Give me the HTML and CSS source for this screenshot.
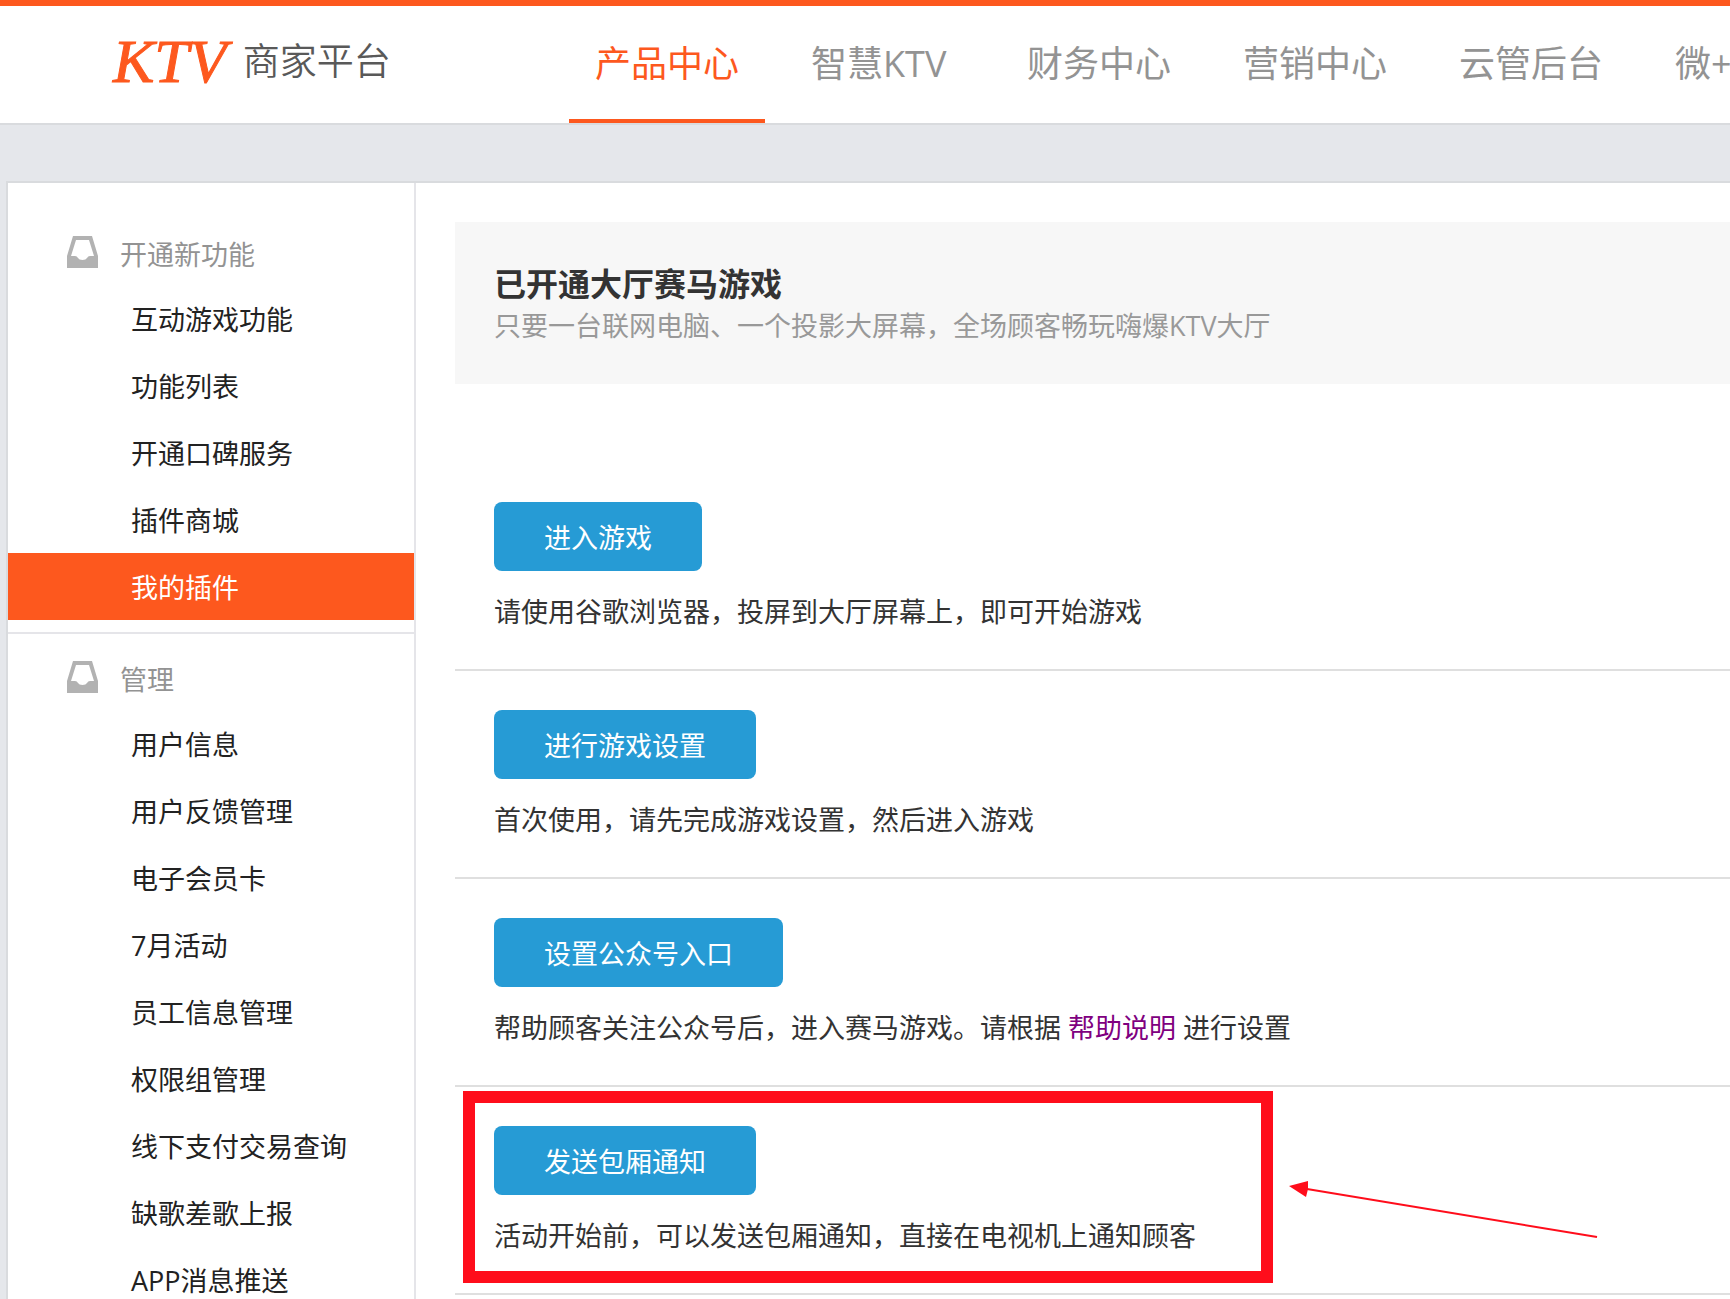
FILE: index.html
```html
<!DOCTYPE html>
<html lang="zh-CN">
<head>
<meta charset="utf-8">
<meta name="viewport" content="width=device-width, initial-scale=1">
<title>KTV 商家平台</title>
<link rel="stylesheet" href="styles.css">
</head>
<body>
<svg class="sprite" aria-hidden="true">
  <symbol id="tray" viewBox="0 0 31 32">
    <path fill-rule="evenodd" d="M6 0H25L31 20V32H0V20ZM9 4L4 20H8Q10 20 11 22Q12 24 15.500 24Q19 24 20 22Q21 20 23 20H27L22 4Z"/>
  </symbol>
</svg>
<header class="header">
  <a class="logo" href="#"><span class="logo-mark">KTV</span><span class="logo-name">商家平台</span></a>
  <nav class="nav">
    <a class="nav-link active" href="#">产品中心</a>
    <a class="nav-link" href="#">智慧KTV</a>
    <a class="nav-link" href="#">财务中心</a>
    <a class="nav-link" href="#">营销中心</a>
    <a class="nav-link" href="#">云管后台</a>
    <a class="nav-link" href="#">微+</a>
  </nav>
</header>
<div class="panel">
  <aside class="sidebar">
    <section class="group">
      <h2 class="group-title"><svg class="tray"><use href="#tray"/></svg>开通新功能</h2>
      <ul class="menu">
        <li><a class="menu-link" href="#">互动游戏功能</a></li>
        <li><a class="menu-link" href="#">功能列表</a></li>
        <li><a class="menu-link" href="#">开通口碑服务</a></li>
        <li><a class="menu-link" href="#">插件商城</a></li>
        <li><a class="menu-link active" href="#">我的插件</a></li>
      </ul>
    </section>
    <section class="group">
      <h2 class="group-title"><svg class="tray"><use href="#tray"/></svg>管理</h2>
      <ul class="menu">
        <li><a class="menu-link" href="#">用户信息</a></li>
        <li><a class="menu-link" href="#">用户反馈管理</a></li>
        <li><a class="menu-link" href="#">电子会员卡</a></li>
        <li><a class="menu-link" href="#">7月活动</a></li>
        <li><a class="menu-link" href="#">员工信息管理</a></li>
        <li><a class="menu-link" href="#">权限组管理</a></li>
        <li><a class="menu-link" href="#">线下支付交易查询</a></li>
        <li><a class="menu-link" href="#">缺歌差歌上报</a></li>
        <li><a class="menu-link" href="#">APP消息推送</a></li>
      </ul>
    </section>
  </aside>
  <main class="content">
    <div class="intro">
      <h1 class="intro-title">已开通大厅赛马游戏</h1>
      <p class="intro-text">只要一台联网电脑、一个投影大屏幕，全场顾客畅玩嗨爆KTV大厅</p>
    </div>
    <section class="row">
      <button class="button" type="button">进入游戏</button>
      <p class="note">请使用谷歌浏览器，投屏到大厅屏幕上，即可开始游戏</p>
    </section>
    <section class="row">
      <button class="button" type="button">进行游戏设置</button>
      <p class="note">首次使用，请先完成游戏设置，然后进入游戏</p>
    </section>
    <section class="row">
      <button class="button" type="button">设置公众号入口</button>
      <p class="note">帮助顾客关注公众号后，进入赛马游戏。请根据 <a class="help" href="#">帮助说明</a> 进行设置</p>
    </section>
    <section class="row">
      <button class="button" type="button">发送包厢通知</button>
      <p class="note">活动开始前，可以发送包厢通知，直接在电视机上通知顾客</p>
      <div class="highlight"></div>
      <svg class="arrow" viewBox="0 0 310 60" aria-hidden="true">
        <path d="M18 9L308 57" fill="none" stroke="currentColor" stroke-width="2"/>
        <path d="M0 6L19 1V9L17 17Z" fill="currentColor"/>
      </svg>
    </section>
  </main>
</div>
</body>
</html>
```
FILE: styles.css
```css
* { box-sizing: border-box; }

body {
  display: flex;
  flex-direction: column;
  height: 100vh;
  margin: 0;
  overflow: hidden;
  background: #e5e7eb;
  color: #333;
  font: 27px/42px "Open Sans", "Noto Sans CJK SC", sans-serif;
}

h1, h2, p, ul { margin: 0; padding: 0; }
ul { list-style: none; }
a { color: inherit; text-decoration: none; }

.sprite { display: none; }

.header {
  display: flex;
  flex: none;
  overflow: hidden;
  background: #fff;
  border-top: 6px solid #fd581e;
  border-bottom: 2px solid #d9dbde;
}

.logo {
  display: flex;
  flex: none;
  align-items: center;
  gap: 16px;
  width: 569px;
  padding-left: 113px;
  padding-bottom: 8px;
}

.logo-mark {
  color: #fd581e;
  font: italic 62px/62px "Liberation Serif", serif;
  -webkit-text-stroke: 1px #fd581e;
}

.logo-name {
  color: #595959;
  font-size: 37px;
  font-weight: 350;
}

.nav { display: flex; gap: 20px; }

.nav-link {
  flex: none;
  min-width: 196px;
  padding: 2px 26px 0;
  border-bottom: 4px solid transparent;
  color: #939393;
  font-size: 36px;
  line-height: 111px;
  white-space: nowrap;
}

.nav-link.active { color: #fd581e; border-color: #fd581e; }

.panel {
  display: flex;
  flex: 1;
  min-height: 0;
  margin: 56px 0 0 6px;
  overflow: hidden;
  background: #fff;
  border-top: 2px solid #d9dbde;
  border-left: 2px solid #d9dbde;
}

.sidebar {
  flex: none;
  width: 408px;
  padding-top: 26px;
  border-right: 2px solid #e5e5e9;
}

.group { padding: 10px 0 12px; border-bottom: 2px solid #e5e5e9; }

.group-title {
  display: flex;
  align-items: center;
  gap: 22px;
  height: 66px;
  padding: 5px 0 0 59px;
  color: #939393;
  font-size: 27px;
  font-weight: 400;
}

.tray { width: 31px; height: 32px; margin-bottom: 6px; fill: #b2b2b2; }

.menu-link {
  display: block;
  padding: 3px 0 0 123px;
  color: #222;
  line-height: 64px;
}

.menu-link.active { background: #fd581e; color: #fff; }

.content { flex: 1; min-width: 0; padding: 39px 0 0 39px; }

.intro { margin-bottom: 79px; padding: 41px 39px 37px; background: #f7f7f7; }
.intro-title { font-size: 32px; line-height: 42px; }
.intro-text { color: #999; }

.row {
  position: relative;
  padding: 39px 39px 36px;
  border-bottom: 2px solid #dfdfdf;
}

.button {
  display: block;
  height: 69px;
  margin-bottom: 20px;
  padding: 2px 50px 0;
  border: 0;
  border-radius: 8px;
  background: #269bd5;
  color: #fff;
  font: inherit;
}

.help { color: #800080; }

.highlight {
  position: absolute;
  top: 4px;
  left: 8px;
  width: 810px;
  height: 192px;
  border: 12px solid #ff0d1b;
}

.arrow {
  position: absolute;
  top: 93px;
  left: 834px;
  width: 310px;
  height: 60px;
  color: #ff0d1b;
}
```
